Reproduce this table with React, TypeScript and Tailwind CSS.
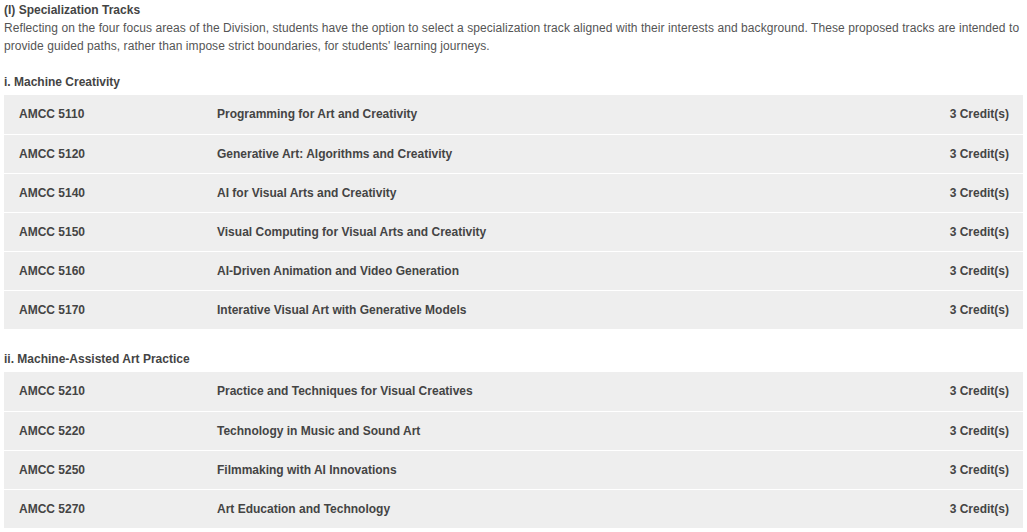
const tracks = [
  {
    heading: 'i. Machine Creativity',
    courses: [
      ['AMCC 5110', 'Programming for Art and Creativity'],
      ['AMCC 5120', 'Generative Art: Algorithms and Creativity'],
      ['AMCC 5140', 'AI for Visual Arts and Creativity'],
      ['AMCC 5150', 'Visual Computing for Visual Arts and Creativity'],
      ['AMCC 5160', 'AI-Driven Animation and Video Generation'],
      ['AMCC 5170', 'Interative Visual Art with Generative Models'],
    ],
  },
  {
    heading: 'ii. Machine-Assisted Art Practice',
    courses: [
      ['AMCC 5210', 'Practice and Techniques for Visual Creatives'],
      ['AMCC 5220', 'Technology in Music and Sound Art'],
      ['AMCC 5250', 'Filmmaking with AI Innovations'],
      ['AMCC 5270', 'Art Education and Technology'],
    ],
  },
]

export default function App() {
  return (
    <div className="bg-white px-[4px] pt-[1px] text-[12px] leading-[18px] text-[#555] font-['Liberation_Sans',Arial,sans-serif]">
      <div className="font-bold text-[#444]">(I) Specialization Tracks</div>
      <p className="tracking-[0.07px]">
        Reflecting on the four focus areas of the Division, students have the option to select a specialization track aligned with their interests and background. These proposed tracks are intended to provide guided paths, rather than impose strict boundaries, for students' learning journeys.
      </p>

      {tracks.map((track, ti) => (
        <div key={ti} className={ti === 0 ? 'mt-[18px]' : 'mt-[21px]'}>
          <div className="font-bold text-[#444]">{track.heading}</div>
          <div className="mt-[4px] bg-[#eeeeee]">
            {track.courses.map(([code, name], i) => (
              <div
                key={code}
                className={`grid grid-cols-[198px_1fr_auto] items-center h-[39px] pl-[15px] pr-[14px] pb-[1px] font-bold text-[#444] ${i > 0 ? 'border-t border-white' : ''}`}
              >
                <div>{code}</div>
                <div>{name}</div>
                <div>3 Credit(s)</div>
              </div>
            ))}
          </div>
        </div>
      ))}
    </div>
  )
}
